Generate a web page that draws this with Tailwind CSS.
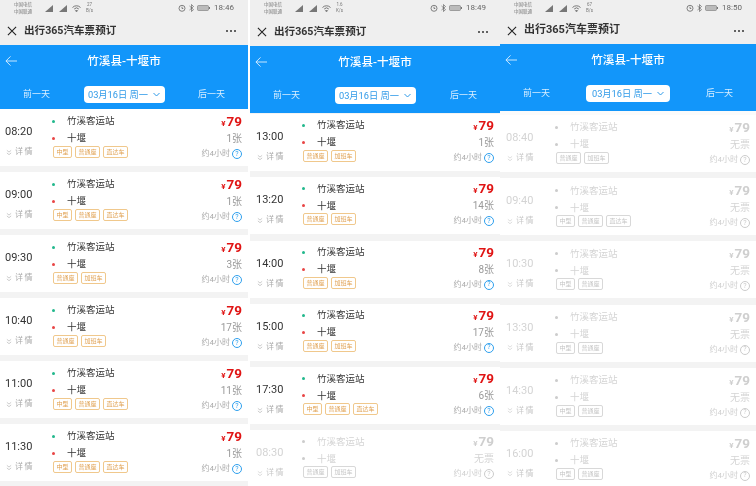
<!doctype html>
<html>
<head>
<meta charset="utf-8">
<script src="https://cdn.jsdelivr.net/npm/@tailwindcss/browser@4"></script>
</head>
<body class="m-0 bg-white">
<div id="root" class="flex w-[756px] h-[486px] overflow-hidden bg-white blur-[0.35px] font-['Roboto','Noto_Sans_CJK_SC',sans-serif]">
</div>
<script>
const P=[
{w:'w-[248px]',mr:'mr-[2px]',x:'pl-[5px] pr-[6px]',col:'w-[42px]',pt:'pt-[4px]',h:'h-[45px]',blue:'h-[67px]',head:'text-[10.6px]',date:'w-[81px]',list:'-mt-[3px] gap-[6px]',clock:'18:46',net:['27','B/s'],rows:[
['08:20','1张',1,1],['09:00','1张',1,1],['09:30','3张',0,1],['10:40','17张',0,1],['11:00','11张',1,1],['11:30','1张',1,1]]},
{w:'w-[250px]',mr:'',x:'pl-[6px] pr-[6px]',col:'w-[41px]',pt:'pt-[3px]',h:'h-[46px]',blue:'h-[67px]',head:'text-[10.6px]',date:'w-[81px]',list:'mt-[1px] gap-[6.3px]',clock:'18:49',net:['1.6','K/s'],rows:[
['13:00','1张',0,1],['13:20','14张',0,1],['14:00','8张',0,1],['15:00','17张',0,1],['17:30','6张',1,1],['08:30','无票',0,0]]},
{w:'w-[256px]',mr:'',x:'pl-[6px] pr-[6px]',col:'w-[44px]',pt:'pt-[4px]',h:'h-[44px]',blue:'h-[71px] border-b-[4px] border-[#fbfbfb]',head:'text-[11px]',date:'w-[84px]',list:'gap-[6.2px]',clock:'18:50',net:['67','B/s'],rows:[
['08:40','无票',0,0],['09:40','无票',1,0],['10:30','无票',2,0],['13:30','无票',2,0],['14:30','无票',2,0],['16:00','无票',2,0]]}];
function tag(t,wide,on){return `<span class="flex items-center justify-center h-[12px] ${wide?'w-[25px]':'w-[19px]'} rounded-[2px] border text-[6px] leading-none ${on?'border-[#f0c88c] text-[#e0a050]':'border-[#d8d8d8] text-[#c4c4c4]'}">${t}</span>`}
function card(r,p){const on=r[3];const tags=r[2]==1?tag('中型',0,on)+tag('普通座',1,on)+tag('直达车',1,on):r[2]==2?tag('中型',0,on)+tag('普通座',1,on):tag('普通座',1,on)+tag('加班车',1,on);
return `<div class="flex h-[57px] shrink-0 bg-white ${p.x}">
<div class="${p.col} shrink-0 flex flex-col">
<div class="mt-[16px] h-[14px] leading-[14px] text-[11px] ${on?'text-[#333333]':'text-[#d4d4d4]'}">${r[0]}</div>
<div class="mt-[6px] h-[14px] flex items-center gap-[3px] text-[8px] tracking-[1.5px] ${on?'text-[#aaaaaa]':'text-[#c8c8c8]'}"><svg class="ml-[1px]" width="6" height="7" viewBox="0 0 7 7" fill="none" stroke="currentColor" stroke-width=".7"><path d="M1 1l2.5 2 2.5-2M1 4l2.5 2 2.5-2"/></svg>详情</div>
</div>
<div class="flex-1 flex flex-col ${p.pt} min-w-0">
<div class="flex items-center h-[17px] text-[9.5px] ${on?'text-[#333333]':'text-[#d4d4d4]'}"><span class="w-[3px] h-[3px] rounded-full ml-[5px] mr-[12px] ${on?'bg-[#22b88c]':'bg-[#cccccc]'}"></span>竹溪客运站</div>
<div class="flex items-center h-[17px] text-[9.5px] ${on?'text-[#333333]':'text-[#d4d4d4]'}"><span class="w-[3px] h-[3px] rounded-full ml-[5px] mr-[12px] ${on?'bg-[#e84545]':'bg-[#cccccc]'}"></span>十堰</div>
<div class="flex gap-[3px] -mt-[1px] ml-[6px]">${tags}</div>
</div>
<div class="flex flex-col items-end ${p.pt} shrink-0">
<div class="h-[17px] flex items-baseline font-bold ${on?'text-[#e01414]':'text-[#cfcfcf]'}"><span class="text-[8px] mr-[1px]">¥</span><span class="text-[13.5px] leading-[17px]">79</span></div>
<div class="h-[17px] leading-[17px] text-[10px] ${on?'text-[#999999]':'text-[#d4d4d4]'}">${r[1]}</div>
<div class="h-[14px] flex items-center gap-[2px] text-[8px] ${on?'text-[#aaaaaa]':'text-[#cfcfcf]'}">约4小时<span class="w-[10px] h-[10px] rounded-full border flex items-center justify-center text-[7px] leading-none ${on?'border-[#2ea0ee] text-[#2ea0ee]':'border-[#cccccc] text-[#cccccc]'}">?</span></div>
</div>
</div>`}
document.getElementById('root').innerHTML=P.map(p=>`<div class="${p.w} ${p.mr} shrink-0 h-full flex flex-col overflow-hidden bg-[#f3f3f3]">
<div class="${p.h} shrink-0 bg-[#efefef] flex flex-col">
<div class="h-[16px] relative flex items-center pl-[14px] pr-[14px] text-[#777777]">
<div class="text-[4.5px] leading-[7px] w-[24px]"><div>中国电信</div><div>中国联通</div></div>
<div class="ml-[6px] flex items-end gap-[5px]"><svg width="9" height="7" viewBox="0 0 9 7" fill="#777777"><path d="M9 0v7H1z"/></svg><svg width="9" height="7" viewBox="0 0 9 7" fill="#777777"><path d="M9 0v7H1z"/></svg><svg width="9" height="7" viewBox="0 0 9 7" fill="none" stroke="#777777"><path d="M.5 2.5a5.5 5.5 0 018 0M2.2 4a3.2 3.2 0 014.6 0M4.5 6.8l1-1.2h-2z"/></svg></div>
<div class="ml-[5px] text-[4.5px] leading-[6px] text-center"><div>${p.net[0]}</div><div>${p.net[1]}</div></div>
<div class="ml-auto flex items-center gap-[3px] text-[8px] text-[#666666]"><svg width="8" height="8" viewBox="0 0 8 8" fill="none" stroke="#666666" stroke-width=".8"><circle cx="4" cy="4.3" r="3"/><path d="M4 2.7v1.8h1.3"/></svg><svg width="5" height="8" viewBox="0 0 5 8" fill="none" stroke="#666666" stroke-width=".7"><path d="M.5 2l4 3.6L2.5 7.5v-7l2 2L.5 6"/></svg><svg width="13" height="6" viewBox="0 0 13 6"><rect x=".5" y=".5" width="11" height="5" rx="1" fill="#bbbbbb" stroke="#777777" stroke-width=".6"/><rect x="12" y="2" width="1" height="2" fill="#777777"/></svg><span class="ml-[1px]">${p.clock}</span></div>
</div>
<div class="flex-1 flex items-center pl-[7px] pr-[12px] pt-[1px]">
<svg width="10" height="10" viewBox="0 0 11 11" fill="none" stroke="#222222" stroke-width="1.2" class="mr-[7px]"><path d="M1 1l9 9M10 1l-9 9"/></svg>
<span class="font-bold ${p.head} text-[#333333] whitespace-nowrap">出行365汽车票预订</span>
<span class="ml-auto flex gap-[2px]"><i class="w-[2px] h-[2px] rounded-full bg-[#333333]"></i><i class="w-[2px] h-[2px] rounded-full bg-[#333333]"></i><i class="w-[2px] h-[2px] rounded-full bg-[#333333]"></i></span>
</div>
</div>
<div class="${p.blue} shrink-0 bg-[#1296fa] flex flex-col text-white">
<div class="h-[33px] relative flex items-center justify-center pt-[1px] text-[11.6px] font-medium">
<svg class="absolute left-[5px] top-[10px]" width="12" height="12" viewBox="0 0 13 12" fill="none" stroke="#d8eeff" stroke-width="1"><path d="M13 6H1M6 1L1 6l5 5"/></svg>竹溪县-十堰市</div>
<div class="flex items-center justify-between px-[23px] mt-[8px] text-[9px] text-[#d8eeff]"><span>前一天</span><span class="${p.date} h-[17px] bg-white rounded-[4px] text-[9.25px] text-[#2f9ae8] flex items-center justify-center gap-[5px] whitespace-nowrap">03月16日 周一<svg width="7" height="5" viewBox="0 0 7 5" fill="none" stroke="#2f9ae8"><path d="M.5 1l3 3 3-3"/></svg></span><span>后一天</span></div>
</div>
<div class="flex-1 flex flex-col ${p.list}">${p.rows.map(r=>card(r,p)).join('')}</div>
</div>`).join('');
</script>
</body>
</html>
